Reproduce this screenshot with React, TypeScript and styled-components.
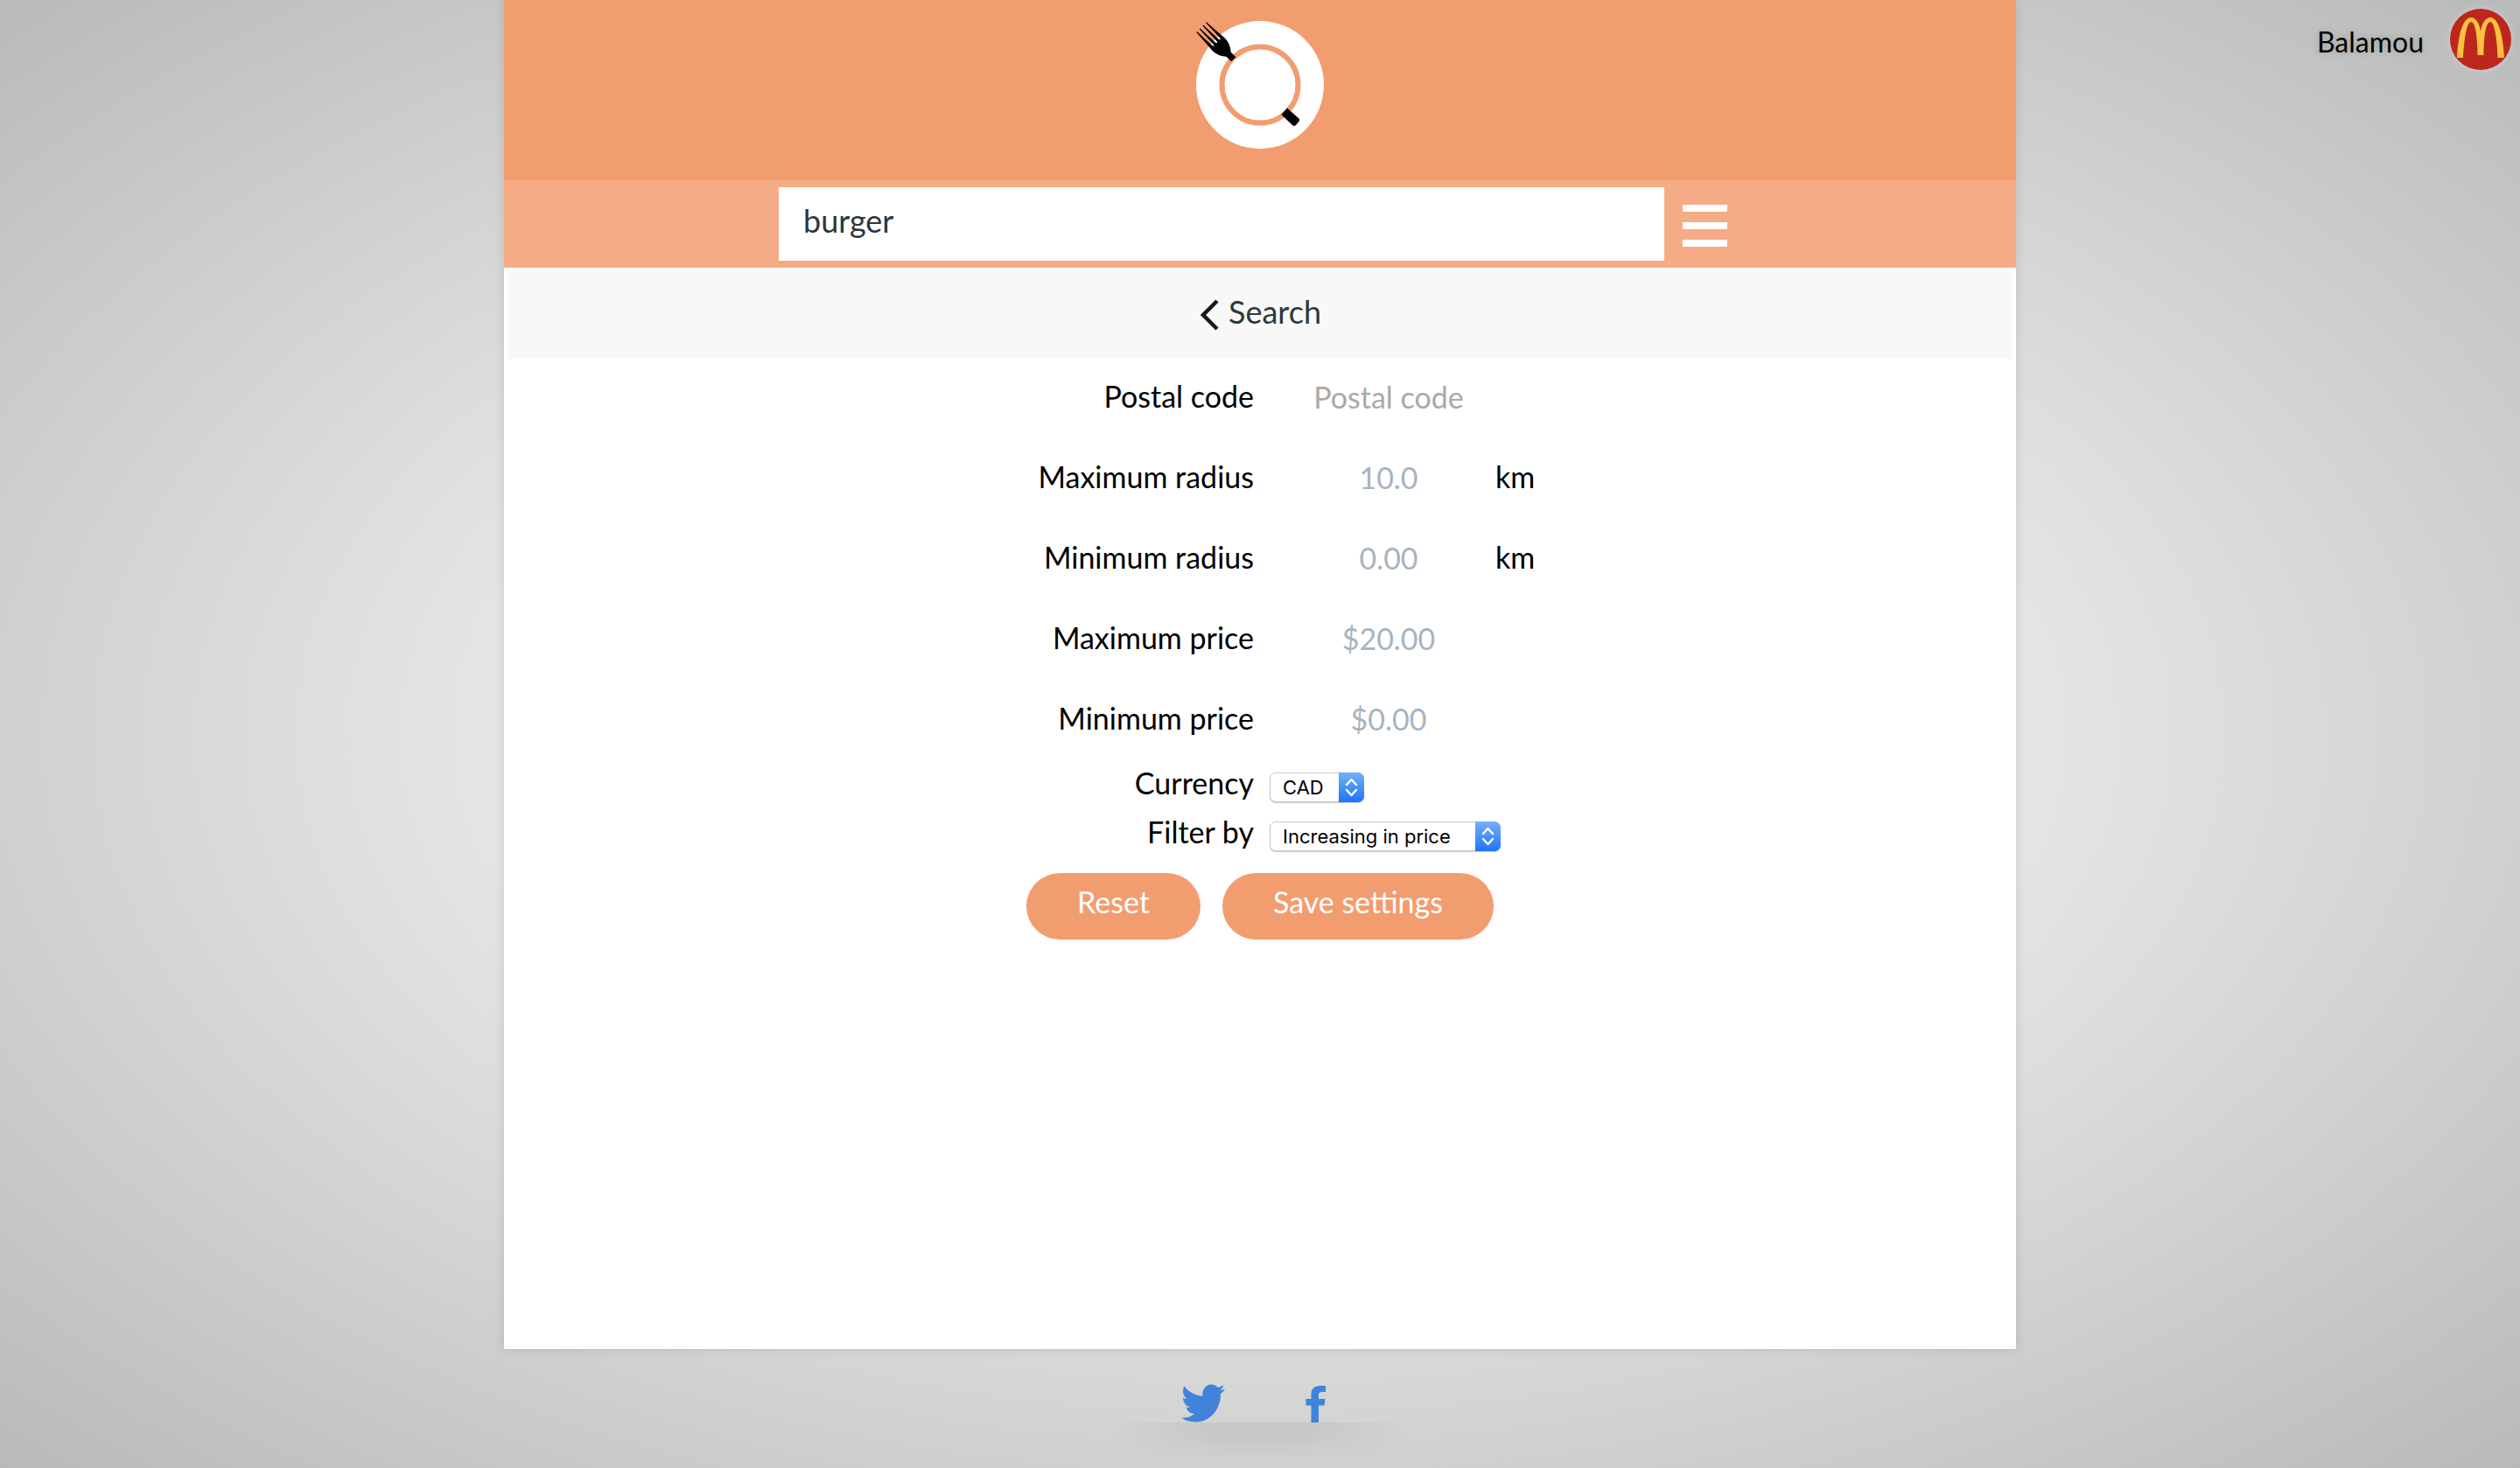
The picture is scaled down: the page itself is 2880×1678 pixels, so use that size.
import React from 'react';
import styled, { createGlobalStyle } from 'styled-components';

const GlobalStyle = createGlobalStyle`
  *, *::before, *::after { box-sizing: border-box; }
  body {
    margin: 0;
    color: #000;
    font-family: Lato, 'Open Sans', sans-serif;
    font-size: 36px;
    line-height: 44px;
  }
  button, input, select { font: inherit; }
`;

const Page = styled.div`
  position: relative;
  display: flex;
  flex-direction: column;
  align-items: center;
  min-height: 100vh;
  background: radial-gradient(ellipse farthest-corner at center, #fff 10%, #b8bab9 100%);
`;

const Account = styled.a`
  position: absolute;
  top: 10px;
  right: 10px;
  display: flex;
  align-items: center;
  gap: 30px;
  color: #000;
  font-size: 32px;
  text-decoration: none;
  text-shadow: 0 0 8px rgba(0, 0, 0, 0.2);
`;

const AccountName = styled.span`
  padding-top: 6px;
`;

const Avatar = styled.svg`
  width: 70px;
  height: 70px;
  border-radius: 50%;
  box-shadow: 0 0 8px rgba(255, 255, 255, 0.3);
`;

const Main = styled.main`
  display: flex;
  flex-direction: column;
  flex: 1;
  width: 60%;
  background: #fff;
  box-shadow: 0 0 12px rgba(0, 0, 0, 0.12);
`;

const Header = styled.header`
  display: flex;
  justify-content: center;
  height: 206px;
  padding-top: 24px;
  background: #f29d70;
`;

const Logo = styled.svg`
  width: 146px;
  height: 146px;
  overflow: visible;
`;

const SearchBar = styled.form`
  display: flex;
  align-items: center;
  justify-content: center;
  gap: 20px;
  padding: 8px 16px 8px 0;
  background: #f5ac86;
`;

const SearchInput = styled.input`
  flex: 0 1 1012px;
  min-width: 0;
  height: 84px;
  padding: 0 28px 8px;
  border: 0;
  color: #2d383c;
  background: #fff;
`;

const MenuButton = styled.button`
  display: flex;
  padding: 0;
  border: 0;
  background: none;
`;

const MenuIcon = styled.svg`
  width: 52px;
  height: 52px;
  fill: #fff;
`;

const BackBar = styled.nav`
  display: flex;
  justify-content: center;
  margin: 4px 4px 0;
  padding: 24px 0 32px;
  background: #f8f8f8;
`;

const BackLink = styled.a`
  display: flex;
  align-items: center;
  gap: 10px;
  color: #2d383c;
  text-decoration: none;
`;

const BackIcon = styled.svg`
  width: 24px;
  height: 36px;
  margin-top: 8px;
`;

const Settings = styled.form`
  display: flex;
  flex-direction: column;
  font-size: 34px;
`;

const Row = styled.div<{ $compact?: boolean }>`
  display: grid;
  grid-template-columns: 1fr 1fr;
  align-items: center;
  gap: 18px;
  height: ${(p) => (p.$compact ? 56 : 92)}px;
  padding-left: 4px;
`;

const Label = styled.label`
  padding-bottom: 6px;
  text-align: right;
`;

const Control = styled.div<{ $inset?: boolean }>`
  display: flex;
  align-items: center;
  padding-left: ${(p) => (p.$inset ? 18 : 0)}px;
`;

const Field = styled.input`
  width: 236px;
  height: 52px;
  padding: 0 0 6px;
  border: 0;
  color: #a9b2c3;
  background: transparent;
  text-align: center;
  &::placeholder { color: #a9a9a9; opacity: 1; }
`;

const Unit = styled.span`
  padding: 0 0 6px 4px;
`;

const SelectBox = styled.div<{ $width: number }>`
  position: relative;
  width: ${(p) => p.$width}px;
  height: 34px;
  margin-top: 4px;
`;

const Select = styled.select`
  appearance: none;
  display: block;
  width: 100%;
  height: 100%;
  padding: 0 30px 0 14px;
  border: 1px solid #c8c8c8;
  border-radius: 7px;
  color: #000;
  background: #fff;
  box-shadow: 0 1px 1px rgba(0, 0, 0, 0.2);
  font-family: Inter, Roboto, sans-serif;
  font-size: 22px;
  line-height: 30px;
`;

const Stepper = styled.svg`
  position: absolute;
  top: 0;
  right: 0;
  width: 29px;
  height: 34px;
  border-radius: 0 7px 7px 0;
  background: linear-gradient(#74b0f7, #1e74fb);
  pointer-events: none;
`;

const Actions = styled.div`
  display: flex;
  justify-content: center;
  gap: 25px;
  padding-top: 16px;
`;

const PillButton = styled.button`
  height: 76px;
  padding: 0 58px 10px;
  border: 0;
  border-radius: 38px;
  color: #fff;
  background: #f29d70;
`;

const Footer = styled.footer`
  display: flex;
  flex-direction: column;
  align-items: center;
  height: 136px;
  padding-top: 40px;
`;

const SocialLinks = styled.div`
  display: flex;
  align-items: flex-end;
  gap: 92px;
  padding-right: 14px;
`;

const SocialLink = styled.a`
  display: flex;
  color: #4083db;
`;

const SocialIcon = styled.svg<{ $width: number }>`
  width: ${(p) => p.$width}px;
  height: 44px;
  fill: currentColor;
`;

const FooterShade = styled.div`
  width: 340px;
  height: 42px;
  background: linear-gradient(rgba(0, 0, 0, 0.06), rgba(0, 0, 0, 0.04) 50%, transparent);
  mask-image: linear-gradient(to right, transparent, #000 35%, #000 65%, transparent);
`;

const FIELDS = [
  { id: 'postal', label: 'Postal code', placeholder: 'Postal code' },
  { id: 'max-radius', label: 'Maximum radius', value: '10.0', unit: 'km' },
  { id: 'min-radius', label: 'Minimum radius', value: '0.00', unit: 'km' },
  { id: 'max-price', label: 'Maximum price', value: '$20.00' },
  { id: 'min-price', label: 'Minimum price', value: '$0.00' },
];

const SELECTS = [
  { id: 'currency', label: 'Currency', width: 108, options: ['CAD', 'USD', 'EUR'] },
  { id: 'filter', label: 'Filter by', width: 264, options: ['Increasing in price', 'Decreasing in price'] },
];

function PlateLogo() {
  return (
    <Logo viewBox="0 0 146 146" role="img" aria-label="Plate and fork">
      <circle cx="73" cy="73" r="73" fill="#fff" />
      <circle cx="73" cy="73" r="43.5" fill="none" stroke="#f29d70" strokeWidth="6" />
      <g transform="translate(6 7) rotate(-45)">
        <path d="M-8.2 0 L-7 0 L-6.2 24 Q-5.2 27 -4.2 24 L-3.3 0 L-2 0 L-1.1 24 Q0 27 1.1 24 L2 0 L3.3 0 L4.2 24 Q5.2 27 6.2 24 L7 0 L8.2 0 L10 27 C10 36 7 40 3.6 44 L3.6 52 L-3.6 52 L-3.6 44 C-7 40 -10 36 -10 27 Z" />
      </g>
      <path d="M104 99.5 L117.5 111.5 Q119 113 117.5 115 L113.5 119.5 Q111.5 120.5 110 119 L97.5 107 Z" />
    </Logo>
  );
}

export default function App() {
  return (
    <>
      <GlobalStyle />
      <Page>
        <Account href="#account">
          <AccountName>Balamou</AccountName>
          <Avatar viewBox="0 0 70 70" aria-hidden="true">
            <rect width="70" height="70" fill="#bd271b" />
            <path
              d="M8 56 C9 36 13 10 24 10 C30 10 34 18 35 26 C36 18 40 10 46 10 C57 10 61 36 62 56 L54.5 56 C54 36 51 15 46 15 C41 15 38.5 32 38.5 53 L31.5 53 C31.500 32 29 15 24 15 C19 15 16 36 15 56 Z"
              fill="#f8c140"
            />
          </Avatar>
        </Account>
        <Main>
          <Header>
            <PlateLogo />
          </Header>
          <SearchBar role="search">
            <SearchInput aria-label="Search food" defaultValue="burger" />
            <MenuButton type="button" aria-label="Menu">
              <MenuIcon viewBox="0 0 52 52" aria-hidden="true">
                <rect x="1" y="4" width="51" height="8" />
                <rect x="1" y="24" width="51" height="8" />
                <rect x="1" y="44" width="51" height="8" />
              </MenuIcon>
            </MenuButton>
          </SearchBar>
          <BackBar>
            <BackLink href="#search">
              <BackIcon viewBox="0 0 24 36" aria-hidden="true">
                <path d="M21 2 L5 18 L21 34" fill="none" stroke="#1a1a1a" strokeWidth="4.5" />
              </BackIcon>
              Search
            </BackLink>
          </BackBar>
          <Settings>
            {FIELDS.map((f) => (
              <Row key={f.id}>
                <Label htmlFor={f.id}>{f.label}</Label>
                <Control $inset>
                  <Field id={f.id} defaultValue={f.value} placeholder={f.placeholder} />
                  {f.unit && <Unit>{f.unit}</Unit>}
                </Control>
              </Row>
            ))}
            {SELECTS.map((s) => (
              <Row key={s.id} $compact>
                <Label htmlFor={s.id}>{s.label}</Label>
                <Control>
                  <SelectBox $width={s.width}>
                    <Select id={s.id}>
                      {s.options.map((o) => (
                        <option key={o}>{o}</option>
                      ))}
                    </Select>
                    <Stepper viewBox="0 0 29 34" aria-hidden="true">
                      <path d="M9 14 L14.5 8 L20 14 M9 20 L14.5 26 L20 20" fill="none" stroke="#fff" strokeWidth="2.5" strokeLinecap="round" strokeLinejoin="round" />
                    </Stepper>
                  </SelectBox>
                </Control>
              </Row>
            ))}
            <Actions>
              <PillButton type="reset">Reset</PillButton>
              <PillButton type="submit">Save settings</PillButton>
            </Actions>
          </Settings>
        </Main>
        <Footer>
          <SocialLinks>
            <SocialLink href="#twitter" aria-label="Twitter">
              <SocialIcon $width={50} viewBox="0 2 24 20" preserveAspectRatio="none">
                <path d="M23.953 4.57a10 10 0 01-2.825.775 4.958 4.958 0 002.163-2.723c-.951.555-2.005.959-3.127 1.184a4.92 4.92 0 00-8.384 4.482C7.69 8.095 4.067 6.13 1.64 3.162a4.822 4.822 0 00-.666 2.475c0 1.71.87 3.213 2.188 4.096a4.904 4.904 0 01-2.228-.616v.06a4.923 4.923 0 003.946 4.827 4.996 4.996 0 01-2.212.085 4.936 4.936 0 004.604 3.417 9.867 9.867 0 01-6.102 2.105c-.39 0-.779-.023-1.17-.067a13.995 13.995 0 007.557 2.209c9.053 0 13.998-7.496 13.998-13.985 0-.21 0-.42-.015-.63A9.935 9.935 0 0024 4.59z" />
              </SocialIcon>
            </SocialLink>
            <SocialLink href="#facebook" aria-label="Facebook">
              <SocialIcon $width={24} viewBox="0 0 24 44">
                <path d="M23 2 V9 H18.5 Q15 9 15 12.5 V17 H22.5 L21.5 24.5 H15 V44 H6.5 V24.5 H0.5 V17 H6.5 V12 Q6.5 2 16.5 2 Z" />
              </SocialIcon>
            </SocialLink>
          </SocialLinks>
          <FooterShade />
        </Footer>
      </Page>
    </>
  );
}
